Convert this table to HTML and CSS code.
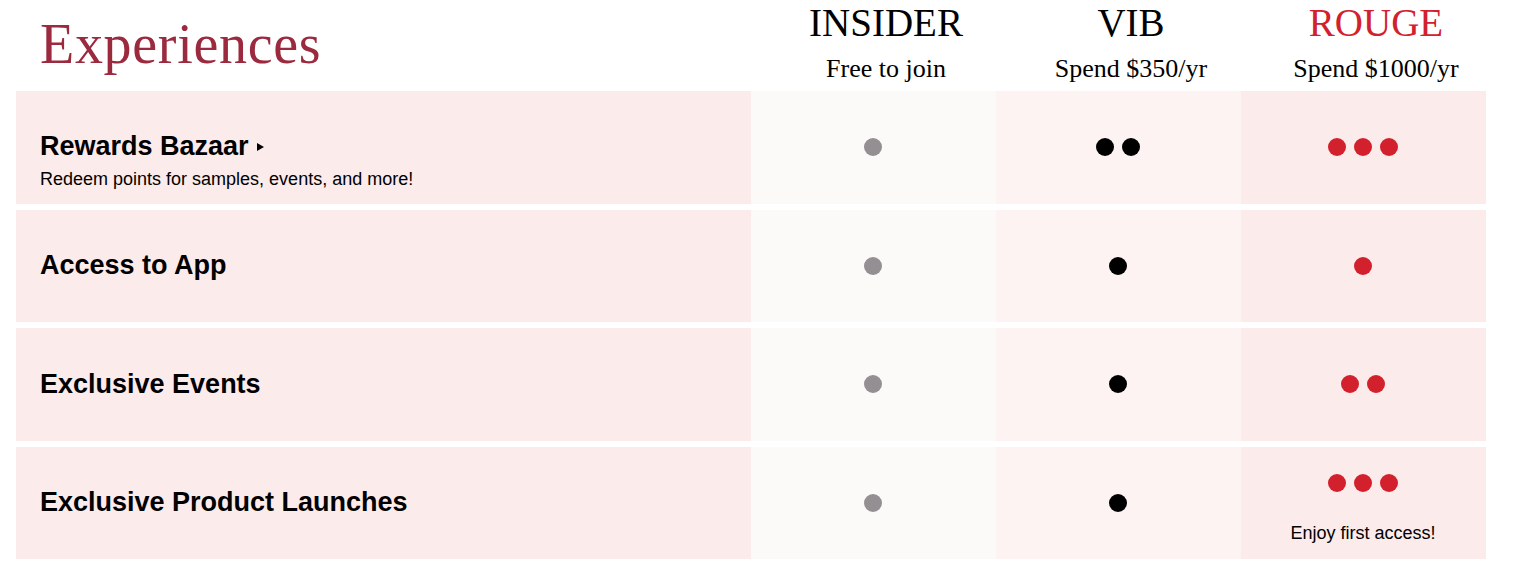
FILE: index.html
```html
<!DOCTYPE html>
<html lang="en">
<head>
<meta charset="utf-8">
<title>Experiences</title>
<link rel="stylesheet" href="styles.css">
</head>
<body>
<div class="page">
  <div class="head">
    <h1 class="title">Experiences</h1>
    <div class="tier">
      <div class="tier-name">INSIDER</div>
      <div class="tier-cost">Free to join</div>
    </div>
    <div class="tier">
      <div class="tier-name">VIB</div>
      <div class="tier-cost">Spend $350/yr</div>
    </div>
    <div class="tier">
      <div class="tier-name tier-rouge">ROUGE</div>
      <div class="tier-cost">Spend $1000/yr</div>
    </div>
  </div>

  <div class="rows">
    <div class="row">
      <div class="label label-sub">
        <div class="label-title">Rewards Bazaar <span class="caret"></span></div>
        <div class="label-note">Redeem points for samples, events, and more!</div>
      </div>
      <div class="cell c-insider"><span class="dot gray"></span></div>
      <div class="cell c-vib"><span class="dot black"></span><span class="dot black"></span></div>
      <div class="cell c-rouge"><span class="dot red"></span><span class="dot red"></span><span class="dot red"></span></div>
    </div>

    <div class="row">
      <div class="label"><div class="label-title">Access to App</div></div>
      <div class="cell c-insider"><span class="dot gray"></span></div>
      <div class="cell c-vib"><span class="dot black"></span></div>
      <div class="cell c-rouge"><span class="dot red"></span></div>
    </div>

    <div class="row">
      <div class="label"><div class="label-title">Exclusive Events</div></div>
      <div class="cell c-insider"><span class="dot gray"></span></div>
      <div class="cell c-vib"><span class="dot black"></span></div>
      <div class="cell c-rouge"><span class="dot red"></span><span class="dot red"></span></div>
    </div>

    <div class="row">
      <div class="label"><div class="label-title">Exclusive Product Launches</div></div>
      <div class="cell c-insider"><span class="dot gray"></span></div>
      <div class="cell c-vib"><span class="dot black"></span></div>
      <div class="cell c-rouge cell-stack">
        <div class="dots"><span class="dot red"></span><span class="dot red"></span><span class="dot red"></span></div>
        <div class="cell-note">Enjoy first access!</div>
      </div>
    </div>
  </div>
</div>
</body>
</html>
```

FILE: styles.css
```css
* { box-sizing: border-box; }

html, body {
  margin: 0;
  padding: 0;
  background: #ffffff;
}

.page {
  padding: 0 16px;
  width: 1502px;
}

.head {
  display: grid;
  grid-template-columns: 735px 245px 245px 245px;
  height: 91px;
  align-items: start;
}

.title {
  margin: 0;
  padding: 12px 0 0 24px;
  font-family: "Liberation Serif", "Times New Roman", serif;
  font-weight: normal;
  font-size: 56px;
  line-height: 64px;
  color: #9b2a3f;
  letter-spacing: 0.7px;
}

.tier {
  display: flex;
  flex-direction: column;
  align-items: center;
  padding-left: 25px;
  padding-top: 1px;
  font-family: "Liberation Serif", "Times New Roman", serif;
  color: #000;
}

.tier-name {
  font-size: 39px;
  line-height: 44px;
}

.tier-rouge { color: #d2202c; }

.tier-cost {
  margin-top: 9px;
  font-size: 26px;
  line-height: 30px;
}

.rows {
  display: flex;
  flex-direction: column;
  gap: 6px;
}

.row {
  display: grid;
  grid-template-columns: 735px 245px 245px 245px;
  height: 112.5px;
}

.label {
  background: #fcebeb;
  padding-left: 24px;
  display: flex;
  flex-direction: column;
  justify-content: center;
  font-family: "Liberation Sans", Arial, sans-serif;
  color: #000;
}

.label-sub { padding-top: 27px; }

.label-title {
  font-size: 27px;
  font-weight: bold;
  line-height: 31px;
  display: flex;
  align-items: center;
}

.caret {
  display: inline-block;
  width: 0;
  height: 0;
  margin-left: 8px;
  margin-top: 1px;
  border-top: 4.5px solid transparent;
  border-bottom: 4.5px solid transparent;
  border-left: 7px solid #000;
}

.label-note {
  margin-top: 7px;
  font-size: 18px;
  line-height: 21px;
}

.cell {
  display: flex;
  align-items: center;
  justify-content: center;
  gap: 8px;
  padding-right: 1px;
}

.c-insider { background: #fcfaf9; }
.c-vib { background: #fdf3f2; }
.c-rouge { background: #fcebeb; }

.cell-stack {
  flex-direction: column;
  gap: 0;
  padding-top: 12px;
}

.dots {
  display: flex;
  gap: 8px;
}

.cell-note {
  margin-top: 31px;
  font-family: "Liberation Sans", Arial, sans-serif;
  font-size: 18px;
  line-height: 21px;
  color: #000;
}

.dot {
  display: block;
  width: 18px;
  height: 18px;
  border-radius: 50%;
}

.gray { background: #948f92; }
.black { background: #000; }
.red { background: #d2202c; }
```
